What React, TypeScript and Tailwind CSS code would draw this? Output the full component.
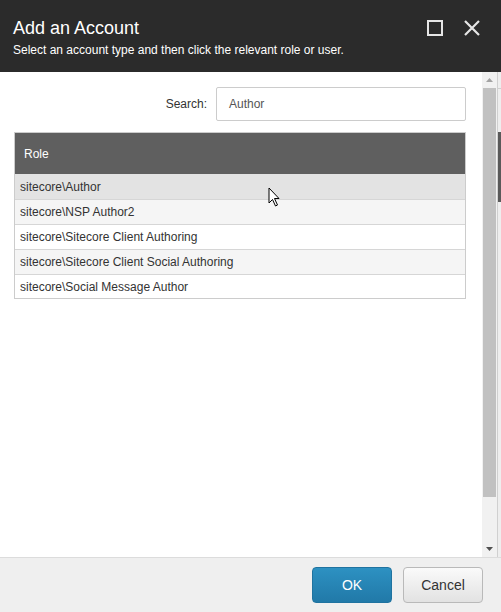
import React from 'react'

const font = { fontFamily: '"Liberation Sans", Arial, sans-serif' }

const roles = [
  'sitecore\\Author',
  'sitecore\\NSP Author2',
  'sitecore\\Sitecore Client Authoring',
  'sitecore\\Sitecore Client Social Authoring',
  'sitecore\\Social Message Author',
]

function rowBg(idx: number): string {
  if (idx === 0) return 'bg-[#e3e3e3] h-[25px]'
  if (idx === roles.length - 1) return 'bg-white border-t h-[24px]'
  return idx % 2 === 1 ? 'bg-[#f5f5f5] border-t h-[25px]' : 'bg-white border-t h-[25px]'
}

export default function App(): JSX.Element {
  return (
    <div className="relative flex h-[612px] w-[501px] flex-col overflow-hidden bg-white" style={font}>
      {/* header */}
      <div className="flex h-[72px] shrink-0 items-start bg-[#2b2b2b] pl-[13px] pr-[20px]">
        <div className="flex-1 pt-[17px]">
          <h1 className="text-[18px] leading-[22px] text-white">Add an Account</h1>
          <p className="mt-[4px] text-[12px] leading-[14px] text-white">Select an account type and then click the relevant role or user.</p>
        </div>
        <div className="flex items-center gap-[20px] pt-[19px]">
          <svg width="16" height="16" viewBox="0 0 16 16">
            <rect x="1" y="1" width="14" height="14" fill="none" stroke="#e6e6e6" strokeWidth="2" />
          </svg>
          <svg width="18" height="18" viewBox="0 0 18 18">
            <path d="M2 2 L16 16 M16 2 L2 16" stroke="#e6e6e6" strokeWidth="2.2" />
          </svg>
        </div>
      </div>

      {/* body */}
      <div className="flex min-h-0 flex-1">
        <div className="flex-1 pl-[14px] pr-[16px] pt-[15px]">
          <div className="flex items-center justify-end gap-[9px]">
            <span className="text-[12px] text-[#333]">Search:</span>
            <div className="flex h-[34px] w-[250px] items-center rounded-[2px] border border-[#cccccc] bg-white px-[12px] text-[12px] text-[#555]">
              Author
            </div>
          </div>
          <div className="mt-[11px] border border-[#cccccc]">
            <div className="flex h-[41px] items-center bg-[#5f5f5f] px-[9px] text-[12px] text-white">Role</div>
            {roles.map((role, idx) => (
              <div key={idx} className={'flex items-center border-[#d6d6d6] px-[5px] text-[12px] text-[#333] ' + rowBg(idx)}>
                {role}
              </div>
            ))}
          </div>
        </div>

        {/* scrollbar */}
        <div className="flex w-[15px] shrink-0 flex-col bg-[#f1f1f1]">
          <div className="flex h-[16px] items-center justify-center">
            <svg width="7" height="4" viewBox="0 0 7 4">
              <path d="M0 4 L3.5 0 L7 4 Z" fill="#a3a3a3" />
            </svg>
          </div>
          <div className="mx-[1px] h-[409px] bg-[#c1c1c1]" />
          <div className="flex-1" />
          <div className="flex h-[16px] items-center justify-center">
            <svg width="7" height="4" viewBox="0 0 7 4">
              <path d="M0 0 L7 0 L3.5 4 Z" fill="#505050" />
            </svg>
          </div>
        </div>
        <div className="flex w-[4px] shrink-0 flex-col border-l border-[#d0d0d0] bg-[#eeeeee]">
          <div className="h-[16px]" />
          <div className="h-[44px] border-t border-[#cfcfcf]" />
          <div className="h-[70px] bg-[#5a5a5a]" />
          <div className="flex-1" />
        </div>
      </div>

      {/* footer */}
      <div className="flex h-[55px] shrink-0 items-center justify-end gap-[11px] border-t border-[#dcdcdc] bg-[#efefef] pr-[18px]">
        <button className="h-[36px] w-[80px] rounded-[4px] border border-[#1f73a0] bg-gradient-to-b from-[#2d91c2] to-[#2179a8] text-[14px] text-white">
          OK
        </button>
        <button className="h-[36px] w-[80px] rounded-[4px] border border-[#b9b9b9] bg-gradient-to-b from-[#fafafa] to-[#e2e2e2] text-[14px] text-[#333]">
          Cancel
        </button>
      </div>

      {/* mouse cursor */}
      <svg className="pointer-events-none absolute left-[268px] top-[187px]" width="13" height="21" viewBox="0 0 13 21">
        <path d="M1 1 L1 16 L4.5 12.5 L7.5 19 L9.5 18 L6.5 11.5 L11 11.5 Z" fill="white" stroke="black" strokeWidth="1" strokeLinejoin="round" />
      </svg>
    </div>
  )
}
